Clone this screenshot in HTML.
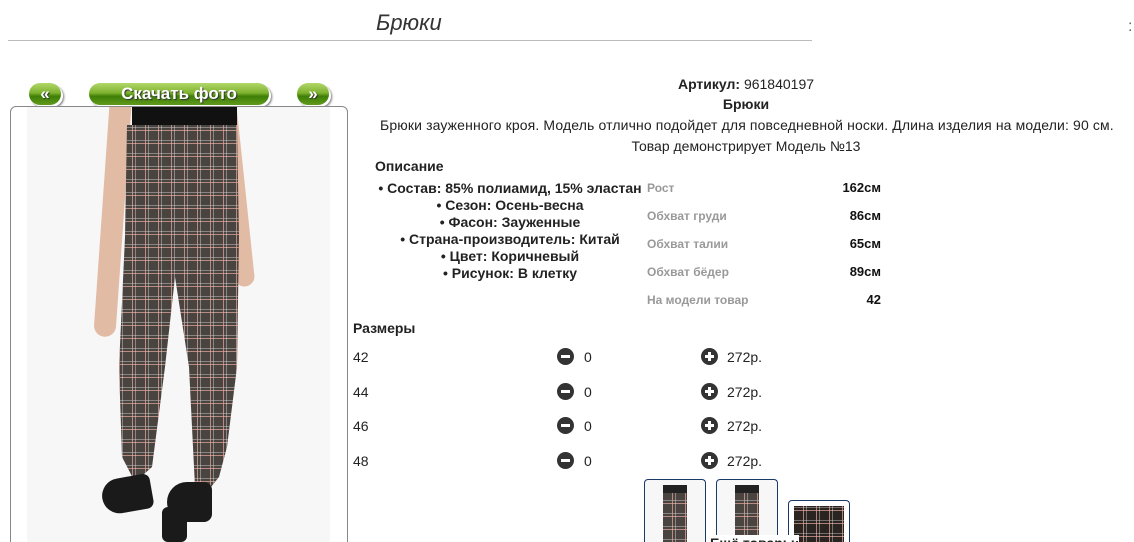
<!DOCTYPE html>
<html><head><meta charset="utf-8"><style>
html,body{margin:0;width:1134px;height:542px;overflow:hidden}
body{background:#fff;font-family:"Liberation Sans",Arial,sans-serif;color:#222;position:relative}
.a{position:absolute;white-space:nowrap}
.btn{position:absolute;height:22px;border-radius:11px;background:linear-gradient(#b2d86a,#7fb22f 45%,#3f7f06 60%,#5f9a1c);color:#fff;font-weight:bold;font-size:17px;text-align:center;line-height:22px;box-shadow:2px 2px 0 #fff,3px 3px 2px #777;text-shadow:1px 1px 1px #333}
.ic{position:absolute;width:17px;height:17px;border-radius:50%;background:#333}
.ic:before{content:"";position:absolute;left:4px;top:7px;width:9px;height:3px;background:#fff}
.pl:after{content:"";position:absolute;left:7px;top:4px;width:3px;height:9px;background:#fff}
.lab{position:absolute;font-size:12px;color:#999;font-weight:bold;left:647px}
.val{position:absolute;font-size:13px;font-weight:bold;color:#111;right:253px}
.plaid{background-color:#4a4440;background-image:repeating-linear-gradient(90deg,transparent 0 9px,rgba(230,170,160,.7) 9px 10px,transparent 10px 12px,rgba(255,255,255,.35) 12px 13px),repeating-linear-gradient(0deg,transparent 0 9px,rgba(230,170,160,.7) 9px 10px,transparent 10px 12px,rgba(255,255,255,.35) 12px 13px)}
.th{position:absolute;width:60px;border:1px solid #1a3a6a;border-radius:4px;border-bottom:none;background:#fff;overflow:hidden}
</style></head><body>
<div class="a" style="left:376px;top:10px;font-size:22px;font-style:italic;color:#333">Брюки</div>
<div class="a" style="left:8px;top:40px;width:804px;height:1px;background:#bbb"></div>
<div class="a" style="left:1128px;top:18px;font-size:16px;color:#666">:</div>

<div class="btn" style="left:29px;top:83px;width:32px">«</div>
<div class="btn" style="left:89px;top:83px;width:180px">Скачать фото</div>
<div class="btn" style="left:297px;top:83px;width:32px">»</div>

<div class="a" style="left:10px;top:106px;width:336px;height:450px;border:1px solid #888;border-radius:6px"></div>
<div class="a" style="left:27px;top:107px;width:303px;height:435px;background:#f7f7f7;overflow:hidden">
 <div class="a" style="left:75px;top:-20px;width:22px;height:250px;background:#e2bba5;border-radius:11px;transform:rotate(4deg)"></div>
 <div class="a" style="left:198px;top:-20px;width:20px;height:200px;background:#e2bba5;border-radius:10px;transform:rotate(-6deg)"></div>
 <div class="a" style="left:105px;top:0;width:105px;height:20px;background:#111"></div>
 <div class="a plaid" style="left:70px;top:10px;width:150px;height:400px;clip-path:polygon(30px 8px,140px 8px,142px 120px,140px 250px,130px 330px,122px 360px,110px 375px,98px 370px,92px 250px,78px 160px,68px 250px,55px 350px,38px 365px,25px 340px,22px 250px,28px 120px)"></div>
 <div class="a" style="left:75px;top:370px;width:50px;height:35px;background:#1a1a1a;border-radius:20px 8px 8px 20px;transform:rotate(-10deg)"></div>
 <div class="a" style="left:140px;top:375px;width:45px;height:40px;background:#1a1a1a;border-radius:20px 8px 8px 20px"></div>
 <div class="a" style="left:135px;top:400px;width:25px;height:35px;background:#1a1a1a;border-radius:6px"></div>
</div>

<div class="a" style="left:560px;top:76px;width:372px;text-align:center;font-size:14px"><b>Артикул:</b> 961840197</div>
<div class="a" style="left:560px;top:96px;width:372px;text-align:center;font-size:14px;font-weight:bold">Брюки</div>
<div class="a" style="left:380px;top:117px;font-size:14px;letter-spacing:0.13px">Брюки зауженного кроя. Модель отлично подойдет для повседневной носки. Длина изделия на модели: 90 см.</div>
<div class="a" style="left:560px;top:138px;width:372px;text-align:center;font-size:14px">Товар демонстрирует Модель №13</div>
<div class="a" style="left:375px;top:158px;font-size:14px;font-weight:bold">Описание</div>
<div class="a" style="left:370px;top:180px;width:280px;text-align:center;font-size:14px;font-weight:bold;line-height:17px;white-space:normal">• Состав: 85% полиамид, 15% эластан<br>• Сезон: Осень-весна<br>• Фасон: Зауженные<br>• Страна-производитель: Китай<br>• Цвет: Коричневый<br>• Рисунок: В клетку</div>
<div class="lab" style="top:181px">Рост</div><div class="val" style="top:180px">162см</div>
<div class="lab" style="top:209px">Обхват груди</div><div class="val" style="top:208px">86см</div>
<div class="lab" style="top:237px">Обхват талии</div><div class="val" style="top:236px">65см</div>
<div class="lab" style="top:265px">Обхват бёдер</div><div class="val" style="top:264px">89см</div>
<div class="lab" style="top:293px">На модели товар</div><div class="val" style="top:292px">42</div>

<div class="a" style="left:353px;top:320px;font-size:14px;font-weight:bold">Размеры</div>
<div class="a" style="left:353px;top:349px;font-size:14px">42</div>
<div class="a" style="left:353px;top:384px;font-size:14px">44</div>
<div class="a" style="left:353px;top:418px;font-size:14px">46</div>
<div class="a" style="left:353px;top:453px;font-size:14px">48</div>
<div class="ic" style="left:557px;top:348px"></div><div class="a" style="left:584px;top:349px;font-size:14px">0</div>
<div class="ic" style="left:557px;top:383px"></div><div class="a" style="left:584px;top:384px;font-size:14px">0</div>
<div class="ic" style="left:557px;top:417px"></div><div class="a" style="left:584px;top:418px;font-size:14px">0</div>
<div class="ic" style="left:557px;top:452px"></div><div class="a" style="left:584px;top:453px;font-size:14px">0</div>
<div class="ic pl" style="left:701px;top:348px"></div><div class="a" style="left:727px;top:349px;font-size:14px">272р.</div>
<div class="ic pl" style="left:701px;top:383px"></div><div class="a" style="left:727px;top:384px;font-size:14px">272р.</div>
<div class="ic pl" style="left:701px;top:417px"></div><div class="a" style="left:727px;top:418px;font-size:14px">272р.</div>
<div class="ic pl" style="left:701px;top:452px"></div><div class="a" style="left:727px;top:453px;font-size:14px">272р.</div>

<div class="th" style="left:644px;top:479px;height:70px;background:#f7f7f7"><div class="a plaid" style="left:18px;top:12px;width:24px;height:60px"></div><div class="a" style="left:18px;top:5px;width:24px;height:8px;background:#222"></div></div>
<div class="th" style="left:716px;top:479px;height:70px;background:#f7f7f7"><div class="a plaid" style="left:18px;top:12px;width:24px;height:60px"></div><div class="a" style="left:18px;top:5px;width:24px;height:8px;background:#222"></div></div>
<div class="th" style="left:788px;top:500px;height:50px"><div class="a plaid" style="left:5px;top:5px;width:50px;height:40px;background-color:#2a2420"></div></div>
<div class="a" style="left:710px;top:535px;font-size:14px;font-weight:bold;background:#fff">Ещё товары:</div>
</body></html>
